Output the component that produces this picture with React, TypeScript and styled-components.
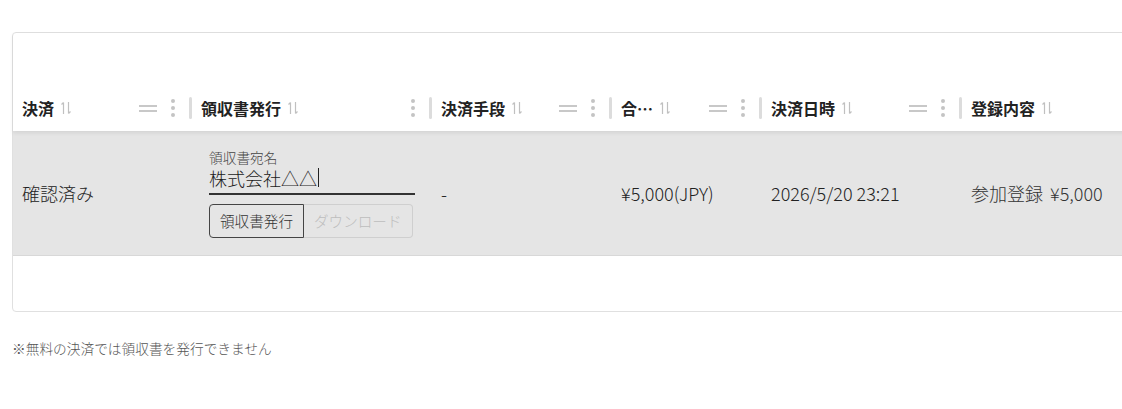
import React from 'react';
import styled, { createGlobalStyle } from 'styled-components';

const GlobalStyle = createGlobalStyle`
    html, body {
        margin: 0;
        padding: 0;
        background: #fff;
        overflow: hidden;
    }
    body {
        font-family: "Noto Sans CJK JP", "Noto Sans", sans-serif;
        color: #333;
    }
`;

const Page = styled.div`
    padding: 32px 0 0 12px;
    width: 1110px;
    overflow: hidden;
`;

const TableBox = styled.div`
    width: 1180px;
    border: 1px solid #e0e0e0;
    border-radius: 4px;
    background: #fff;
`;

const COLS = '179px 240px 180px 150px 200px 1fr';

const HeadRow = styled.div`
    display: grid;
    grid-template-columns: ${COLS};
    height: 98px;
    align-items: end;
    padding-bottom: 12px;
    box-sizing: border-box;
    position: relative;
    z-index: 1;
    box-shadow: 0 2px 4px rgba(0, 0, 0, 0.08);
`;

const HeadCell = styled.div`
    display: flex;
    align-items: center;
    height: 22px;
    padding-left: 9px;
`;

const HeadLabel = styled.span`
    font-size: 16px;
    font-weight: 700;
    color: #222;
    white-space: nowrap;
    line-height: 22px;
`;

const SortIcon = styled.svg`
    width: 12px;
    height: 14px;
    margin-left: 6px;
    flex: none;
`;

const Spacer = styled.div`
    flex: 1;
`;

const DragHandle = styled.div`
    width: 18px;
    height: 7px;
    border-top: 2px solid #c8c8c8;
    border-bottom: 2px solid #c8c8c8;
    box-sizing: border-box;
    margin-right: 14px;
    flex: none;
`;

const Dots = styled.div`
    display: flex;
    flex-direction: column;
    gap: 3px;
    margin-right: 14px;
    flex: none;

    span {
        width: 4px;
        height: 4px;
        border-radius: 50%;
        background: #c4c4c4;
    }
`;

const Separator = styled.div`
    width: 3px;
    height: 22px;
    border-radius: 2px;
    background: #dcdcdc;
    flex: none;
`;

const BodyRow = styled.div`
    display: grid;
    grid-template-columns: ${COLS};
    height: 124px;
    align-items: center;
    background: #e5e5e5;
    border-bottom: 1px solid #d8d8d8;
`;

const BodyCell = styled.div<{ $pad?: number; $tone?: string }>`
    padding-left: ${p => p.$pad ?? 9}px;
    font-size: 18px;
    font-weight: 300;
    color: ${p => p.$tone ?? '#222'};
    white-space: nowrap;
`;

const Amount = styled.span`
    margin-left: 7px;
`;

const EmptyArea = styled.div`
    height: 55px;
`;

const Field = styled.div`
    width: 206px;
`;

const FieldLabel = styled.div`
    font-size: 13.7px;
    color: #444;
    line-height: 17px;
`;

const FieldInput = styled.div`
    font-size: 18px;
    color: #1a1a1a;
    line-height: 24px;
    padding-bottom: 3px;
    border-bottom: 2px solid #333;
    display: flex;
    align-items: center;
`;

const Caret = styled.span`
    display: inline-block;
    width: 1px;
    height: 19px;
    background: #222;
    margin-left: 1px;
`;

const ButtonGroup = styled.div`
    display: flex;
    margin-top: 9px;
`;

const GroupButton = styled.button<{ $disabled?: boolean }>`
    font-family: inherit;
    font-size: 14.6px;
    font-weight: 300;
    height: 34px;
    padding: 0 10px;
    background: transparent;
    color: ${p => (p.$disabled ? '#bdbdbd' : '#333')};
    border: 1px solid ${p => (p.$disabled ? '#cfcfcf' : '#444')};
    cursor: pointer;

    &:first-child {
        border-radius: 4px 0 0 4px;
    }
    &:last-child {
        border-radius: 0 4px 4px 0;
        border-left: none;
    }
`;

const Note = styled.p`
    margin: 26px 0 0;
    font-size: 13.7px;
    font-weight: 300;
    color: #555;
`;

const Sort = () => (
    <SortIcon viewBox="0 0 12 14">
        <path d="M3.5 13V1.5M1.5 3.5l2-2M8.5 1v11.5M10.5 10.5l-2 2" stroke="#c0c0c0" strokeWidth="1.2" fill="none" />
    </SortIcon>
);

interface ColumnProps {
    label: string;
    drag?: boolean;
}

const HeaderColumn: React.FC<ColumnProps> = ({ label, drag = true }) => (
    <HeadCell>
        <HeadLabel>{label}</HeadLabel>
        <Sort />
        <Spacer />
        {drag && <DragHandle />}
        <Dots>
            <span />
            <span />
            <span />
        </Dots>
        <Separator />
    </HeadCell>
);

const App: React.FC = () => {
    return (
        <Page>
            <GlobalStyle />
            <TableBox>
                <HeadRow>
                    <HeaderColumn label="決済" />
                    <HeaderColumn label="領収書発行" drag={false} />
                    <HeaderColumn label="決済手段" />
                    <HeaderColumn label="合…" />
                    <HeaderColumn label="決済日時" />
                    <HeadCell>
                        <HeadLabel>登録内容</HeadLabel>
                        <Sort />
                    </HeadCell>
                </HeadRow>
                <BodyRow>
                    <BodyCell>確認済み</BodyCell>
                    <BodyCell $pad={17}>
                        <Field>
                            <FieldLabel>領収書宛名</FieldLabel>
                            <FieldInput>
                                株式会社△△<Caret />
                            </FieldInput>
                        </Field>
                        <ButtonGroup>
                            <GroupButton>領収書発行</GroupButton>
                            <GroupButton $disabled>ダウンロード</GroupButton>
                        </ButtonGroup>
                    </BodyCell>
                    <BodyCell>-</BodyCell>
                    <BodyCell>¥5,000(JPY)</BodyCell>
                    <BodyCell>2026/5/20 23:21</BodyCell>
                    <BodyCell $tone="#333">
                        参加登録<Amount>¥5,000</Amount>
                    </BodyCell>
                </BodyRow>
                <EmptyArea />
            </TableBox>
            <Note>※無料の決済では領収書を発行できません</Note>
        </Page>
    );
};

export default App;
